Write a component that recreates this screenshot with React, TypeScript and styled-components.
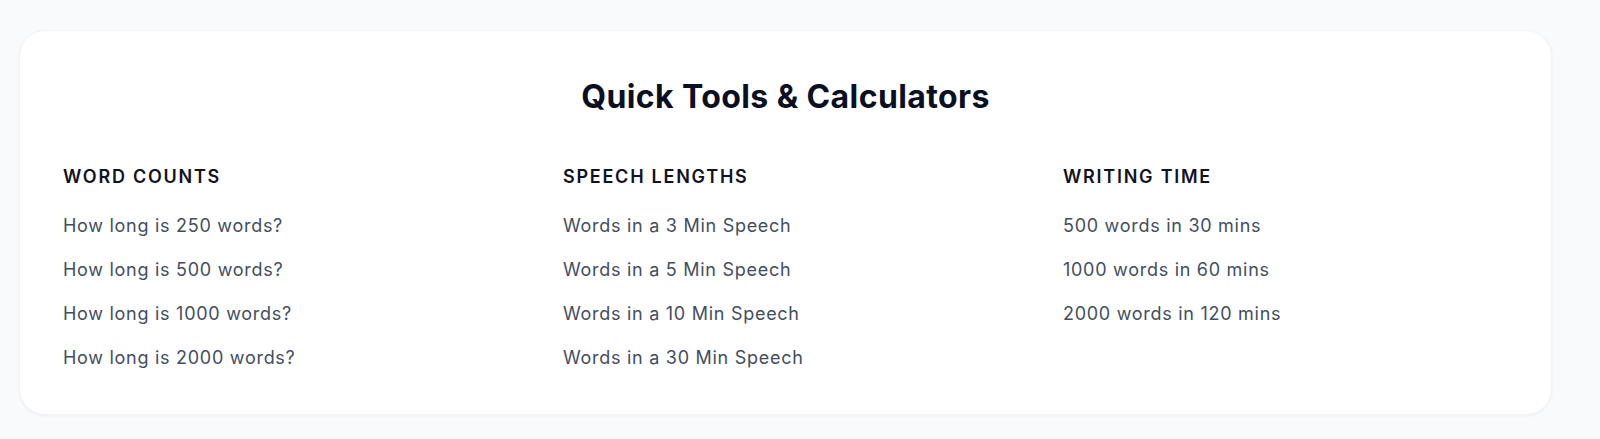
import styled, { createGlobalStyle } from "styled-components";

const GlobalStyle = createGlobalStyle`
  * {
    box-sizing: border-box;
  }
  body {
    margin: 0;
    background: #f8fafc;
    font-family: Inter, "Noto Sans", Arial, sans-serif;
  }
`;

type ToolGroup = {
  title: string;
  links: string[];
};

const groups: ToolGroup[] = [
  {
    title: "Word Counts",
    links: [
      "How long is 250 words?",
      "How long is 500 words?",
      "How long is 1000 words?",
      "How long is 2000 words?",
    ],
  },
  {
    title: "Speech Lengths",
    links: [
      "Words in a 3 Min Speech",
      "Words in a 5 Min Speech",
      "Words in a 10 Min Speech",
      "Words in a 30 Min Speech",
    ],
  },
  {
    title: "Writing Time",
    links: ["500 words in 30 mins", "1000 words in 60 mins", "2000 words in 120 mins"],
  },
];

const App = () => {
  return (
    <>
      <GlobalStyle />
      <Page>
        <Card>
          <Title>Quick Tools &amp; Calculators</Title>
          <Columns>
            {groups.map((group) => (
              <Column key={group.title}>
                <GroupTitle>{group.title}</GroupTitle>
                <LinkList>
                  {group.links.map((link) => (
                    <li key={link}>
                      <ToolLink href="#">{link}</ToolLink>
                    </li>
                  ))}
                </LinkList>
              </Column>
            ))}
          </Columns>
        </Card>
      </Page>
    </>
  );
};

export default App;

const Page = styled.div`
  width: 1600px;
  height: 439px;
  padding: 30px 48px 0 19px;
`;

const Card = styled.section`
  width: 1533px;
  height: 385px;
  background: #ffffff;
  border: 1px solid #f1f3f6;
  border-radius: 26px;
  box-shadow: 0 1px 3px rgba(15, 23, 42, 0.05);
  padding: 48px 43px 0;
`;

const Title = styled.h2`
  margin: 0 0 48px;
  text-align: center;
  font-size: 32px;
  line-height: 36px;
  font-weight: 700;
  letter-spacing: 0.4px;
  color: #0b0f22;
`;

const Columns = styled.div`
  display: grid;
  grid-template-columns: repeat(3, 446px);
  column-gap: 54px;
`;

const Column = styled.div`
  display: flex;
  flex-direction: column;
`;

const GroupTitle = styled.h3`
  margin: 0 0 21px;
  font-size: 18px;
  line-height: 28px;
  font-weight: 600;
  letter-spacing: 1.75px;
  text-transform: uppercase;
  color: #111322;
`;

const LinkList = styled.ul`
  list-style: none;
  margin: 0;
  padding: 0;
  display: flex;
  flex-direction: column;
  gap: 16px;
`;

const ToolLink = styled.a`
  font-size: 18px;
  line-height: 28px;
  letter-spacing: 0.72px;
  color: #434e60;
  text-decoration: none;
`;
